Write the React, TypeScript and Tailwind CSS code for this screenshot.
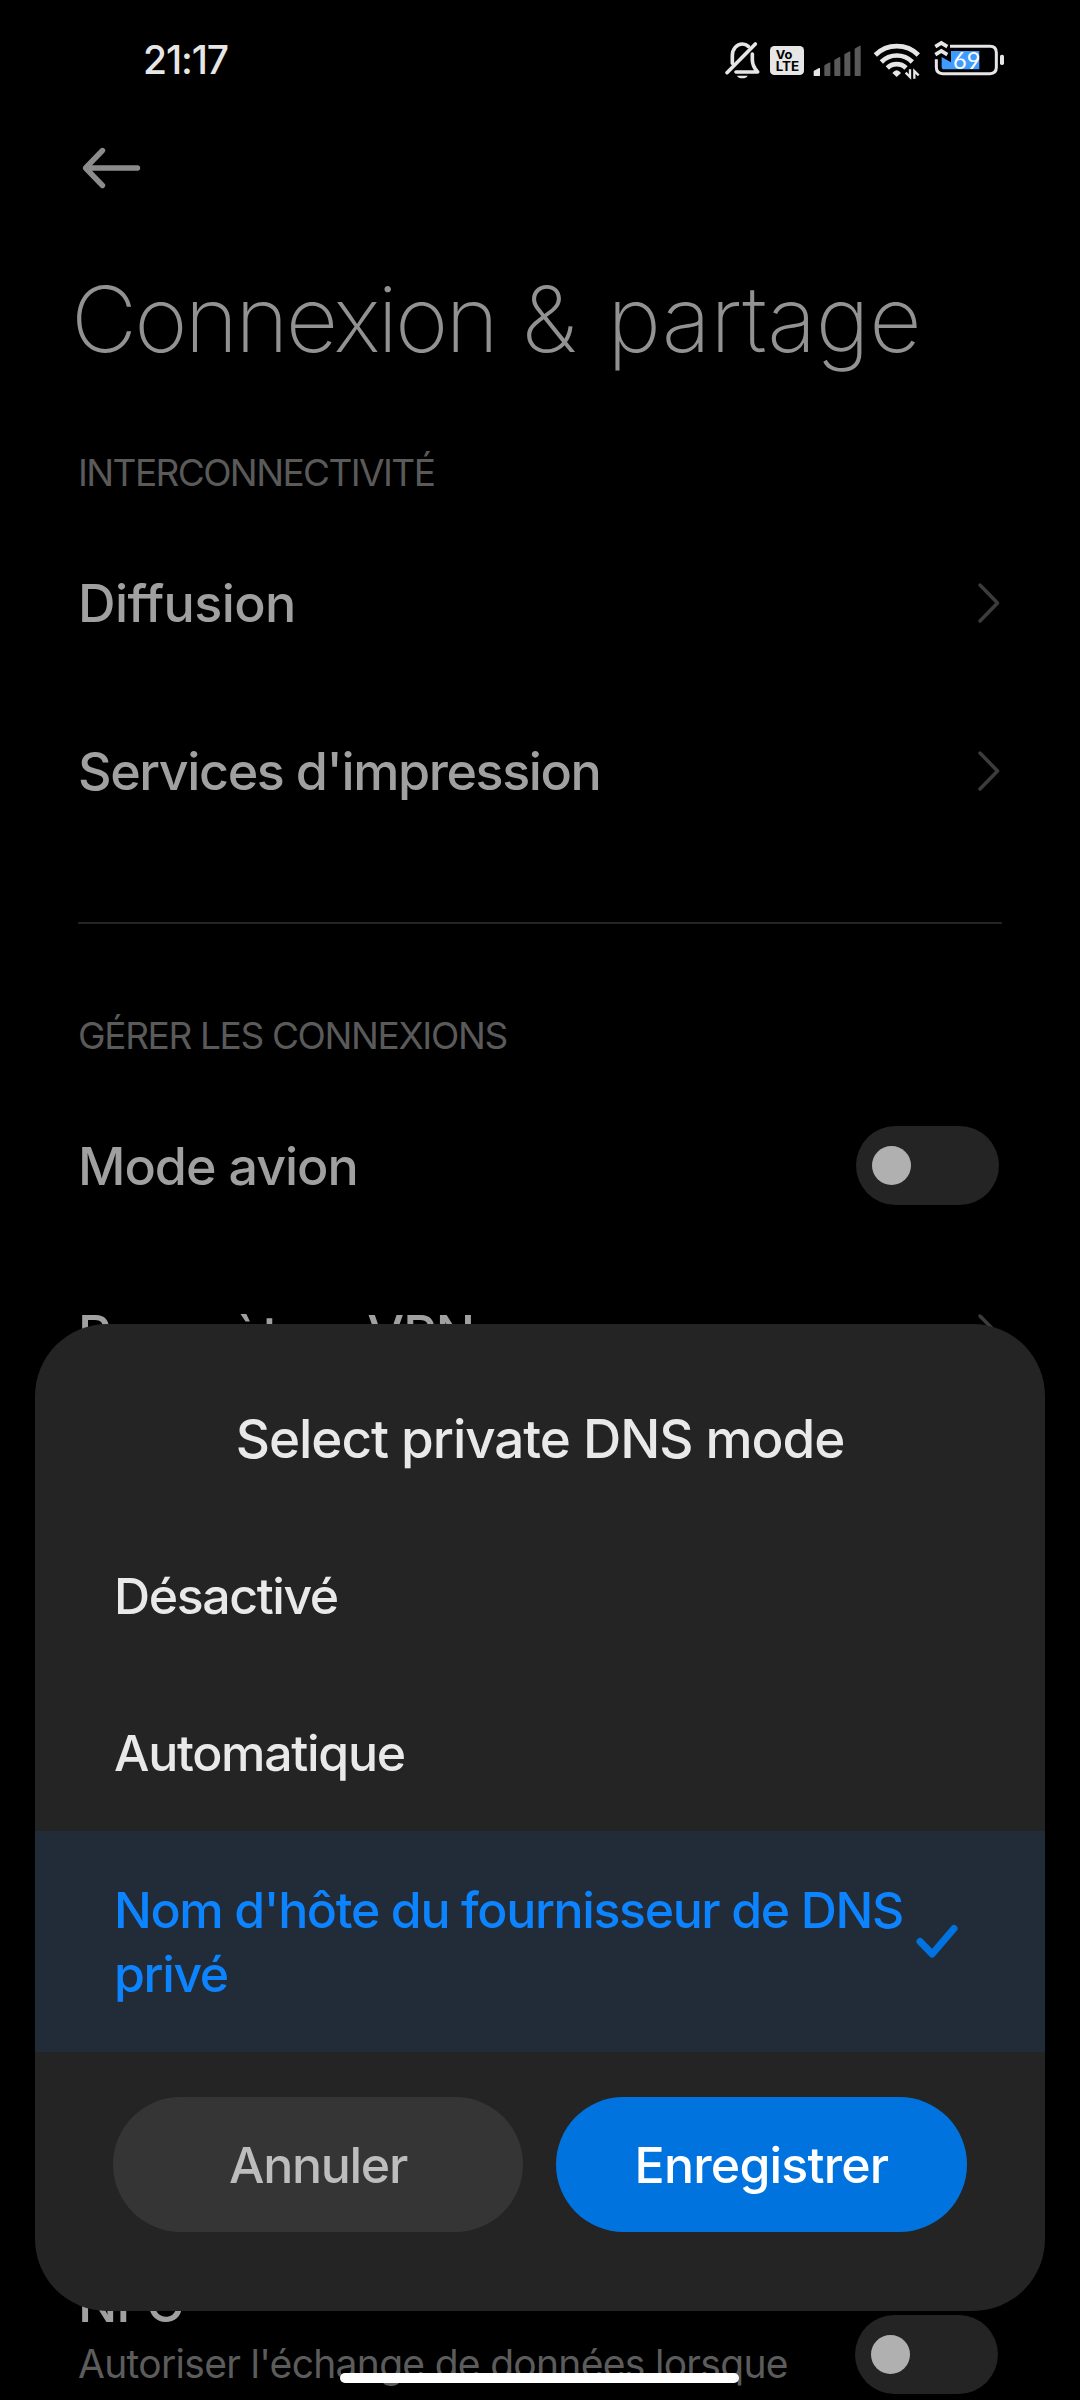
import { useState } from 'react';
import clsx from 'clsx';

const OPTIONS = [
    { id: 'off', label: 'Désactivé', tracking: 'tracking-[-1.4px]' },
    { id: 'auto', label: 'Automatique', tracking: 'tracking-[-1.3px]' },
    { id: 'host', label: "Nom d'hôte du fournisseur de DNS privé", tracking: 'tracking-[-1.36px]' },
];

export default function App() {
    const [selected, setSelected] = useState('host');

    return (
        <div className="relative w-[1080px] h-[2400px] overflow-hidden bg-black font-['Inter',sans-serif]">
            <StatusBar />

            <div className="h-24 px-20 flex items-center">
                <BackArrow />
            </div>
            <h1 className="h-[205px] mb-[5px] pt-px pl-[71px] leading-[205px] text-[91px] font-extralight text-[#929292] whitespace-nowrap">
                <span className="tracking-[-2.8px]">Connexion</span> &amp; <span className="ml-[5px] tracking-[-0.4px]">partage</span>
            </h1>

            <h2 className="h-[93px] px-[78px] flex items-center text-[37px] tracking-[-1.6px] text-[#5a5a5a]">INTERCONNECTIVITÉ</h2>
            <Row label="Diffusion" tracking="tracking-[-0.6px]"><Chevron /></Row>
            <Row label="Services d'impression" tracking="tracking-[-1.4px]"><Chevron /></Row>

            <div className="mx-[78px] mt-[67px] mb-[66px] h-0.5 bg-[#242424]" />

            <h2 className="h-[92px] px-[78px] flex items-center text-[37px] tracking-[-1.35px] text-[#5a5a5a]">GÉRER LES CONNEXIONS</h2>
            <Row label="Mode avion" tracking="tracking-[-1px]"><Toggle className="mr-px mb-px" /></Row>
            <Row label="Paramètres VPN" tracking="tracking-[-0.8px]"><Chevron /></Row>

            <div className="mt-[854px] h-[165px] pl-[78px] pr-[82px] flex items-center justify-between">
                <div className="h-full">
                    <p className="h-[63px] leading-[63px] text-[52px] font-medium tracking-[-1px] text-[#a0a0a0]">NFC</p>
                    <p className="h-[58px] leading-[58px] text-[39px] tracking-[-0.7px] text-[#5c5c5c] whitespace-nowrap">
                        Autoriser l'échange de données lorsque
                    </p>
                </div>
                <Toggle />
            </div>

            <div className="absolute left-[35px] top-[1324px] w-[1010px] h-[987px] rounded-[72px] bg-[#242424] overflow-hidden">
                <h3 className="h-[193px] pt-[80px] leading-[70px] text-center text-[53px] font-medium tracking-[-1.05px] text-[#e9e9e9]">
                    Select private DNS mode
                </h3>
                {OPTIONS.map((o) => (
                    <button
                        key={o.id}
                        onClick={() => setSelected(o.id)}
                        className={clsx(
                            'w-full pl-[79px] pr-[86px] flex items-center justify-between text-left text-[50px] leading-[64px] font-medium',
                            o.tracking,
                            selected === o.id ? 'h-[221px] bg-[#222c38] text-[#0d84ff]' : 'h-[157px] text-[#e9e9e9]',
                        )}
                    >
                        <span className="w-[800px]">{o.label}</span>
                        {selected === o.id && <CheckMark />}
                    </button>
                ))}
                <div className="mt-[45px] px-[78px] flex justify-between text-[50px] font-medium">
                    <button className="w-[410px] h-[135px] pt-0.5 rounded-full bg-[#353535] tracking-[-1.3px] text-[#bdbdbd]">Annuler</button>
                    <button className="w-[411px] h-[135px] pt-0.5 rounded-full bg-[#0073de] tracking-[-0.8px] text-white">Enregistrer</button>
                </div>
            </div>

            <div className="absolute left-[340px] top-[2373px] w-[399px] h-2.5 rounded-full bg-white" />
        </div>
    );
}

function Row({ label, tracking, children }: { label: string, tracking: string, children: React.ReactNode }) {
    return (
        <div className="h-[168px] pl-[78px] pr-[80px] flex items-center justify-between">
            <span className={clsx('pt-0.5 text-[52px] font-medium text-[#a0a0a0]', tracking)}>{label}</span>
            {children}
        </div>
    );
}

function Toggle({ className }: { className?: string }) {
    return (
        <div className={clsx('w-[143px] h-[79px] rounded-full bg-[#242424] flex items-center pl-4', className)}>
            <div className="w-[39px] h-[39px] rounded-full bg-[#b0b0b0]" />
        </div>
    );
}

function Chevron() {
    return (
        <svg width="23" height="42" viewBox="0 0 23 42" fill="none" stroke="#3c3c3c" strokeWidth="3.5" strokeLinecap="round" strokeLinejoin="round">
            <path d="M3 3 L20.5 21 L3 39" />
        </svg>
    );
}

function BackArrow() {
    return (
        <svg width="62" height="44" viewBox="0 0 62 44" fill="none" stroke="#8c8c8c" strokeWidth="5.4" strokeLinecap="round" strokeLinejoin="round">
            <path d="M57.5 22 H6 M22.5 4.5 L5.5 22 L22.5 39.5" />
        </svg>
    );
}

function CheckMark() {
    return (
        <svg width="44" height="36" viewBox="0 0 44 36" fill="none" stroke="#0073e0" strokeWidth="7" strokeLinecap="round" strokeLinejoin="round">
            <path d="M5 17.5 L17.2 30 L39 4.5" />
        </svg>
    );
}

function StatusBar() {
    return (
        <div className="h-[120px] pl-[143px] pr-[76px] flex items-center">
            <span className="pt-px text-[39px] font-medium tracking-[-1.1px] text-[#e6e6e6] mr-auto">21:17</span>

            {/* muted bell */}
            <svg width="37" height="40" viewBox="72 60 111 120" fill="none" stroke="#e6e6e6" strokeWidth="11" strokeLinecap="round" strokeLinejoin="round">
                <path d="M97 130 V107 C97 87 110 72 127 72 C134 72 140 74 145 79" />
                <path d="M157 102 V120 C157 134 164 146 173 156 H108" />
                <path d="M81 158 L166 72" />
                <path d="M111 167 H143 A17 12 0 0 1 111 167 Z" fill="#e6e6e6" stroke="none" />
            </svg>

            {/* VoLTE */}
            <svg className="ml-[9px]" width="34" height="40" viewBox="210 60 102 120" fontFamily="Inter" fontWeight="700" fill="#000">
                <rect x="210" y="78" width="102" height="87" rx="13" fill="#e6e6e6" />
                <text x="227" y="116" fontSize="36" textLength="50" lengthAdjust="spacingAndGlyphs">Vo</text>
                <text x="227" y="154" fontSize="38" textLength="70" lengthAdjust="spacingAndGlyphs">LTE</text>
            </svg>

            {/* signal */}
            <svg className="ml-[9px]" width="48" height="40" viewBox="339 60 144 120" fill="#5a5a5a" stroke="#5a5a5a" strokeWidth="4" strokeLinejoin="round">
                <path d="M343 154 L358 146 V166 H343 Z" fill="#e6e6e6" stroke="#e6e6e6" />
                <path d="M375 137 L389 129 V166 H375 Z" />
                <path d="M405 121 L419 113 V166 H405 Z" />
                <path d="M435 104 L449 96 V166 H435 Z" />
                <path d="M466 87 L480 79 V166 H466 Z" />
            </svg>

            {/* wifi */}
            <svg className="ml-3" width="47" height="40" viewBox="519 60 141 120" fill="none" stroke="#e6e6e6" strokeWidth="14">
                <path d="M526 105 A92 92 0 0 1 655 105" />
                <path d="M544 126 A65 65 0 0 1 637 126" />
                <path d="M562 144 A40 40 0 0 1 618 144" />
                <path d="M577 159 Q590 143 603 159 L590 171 Z" fill="#e6e6e6" stroke="none" />
                <path d="M631 150 V173 L619 162 M643 173 V150 L655 160" stroke="#000" strokeWidth="12" />
                <path d="M630 148 V171 L617 158 M643 176 V153 L656 166" strokeWidth="7" />
            </svg>

            {/* battery */}
            <svg className="ml-3.5" width="70" height="40" viewBox="702 60 210 120" fill="none" stroke="#e6e6e6" strokeWidth="9">
                <path d="M750 79 H870 Q889 79 889 98 V142 Q889 161 870 161 H728 Q709 161 709 142 V118" />
                <path d="M753 93 H838 V148 H733 Q725 148 725 140 V111 L753 127 Z" fill="#3f9bff" stroke="none" />
                <path d="M706 80 L724 69 L742 80 M706 104 L724 93 L742 104" strokeWidth="11" />
                <rect x="900" y="104" width="12" height="31" rx="5" fill="#e6e6e6" stroke="none" />
                <text x="759" y="147" fontSize="70" fontFamily="Lato" fontWeight="400" textLength="82" lengthAdjust="spacingAndGlyphs" fill="#fff" stroke="none">69</text>
            </svg>
        </div>
    );
}
